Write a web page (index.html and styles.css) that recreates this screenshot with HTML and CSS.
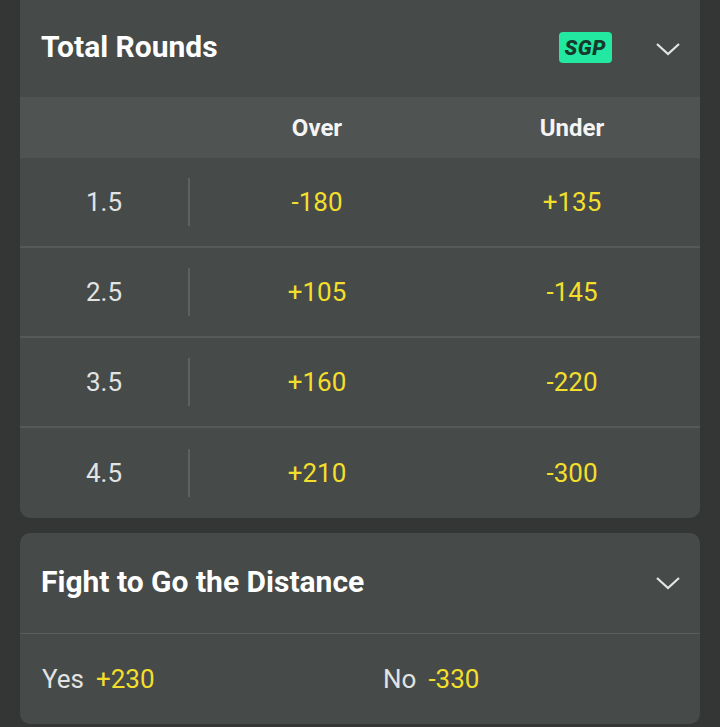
FILE: index.html
```html
<!DOCTYPE html>
<html lang="en">
<head>
    <meta charset="UTF-8">
    <meta name="viewport" content="width=device-width, initial-scale=1.0">
    <title>Markets</title>
    <link rel="stylesheet" href="styles.css">
</head>
<body>
    <div class="page">
        <section class="card card-top">
            <div class="card-header">
                <h2 class="card-title">Total Rounds</h2>
                <span class="sgp">SGP</span>
                <svg class="chevron" viewBox="0 0 26 16" width="26" height="16">
                    <path d="M2 3 L13 13 L24 3" fill="none" stroke="#e4e6e5" stroke-width="2.2"/>
                </svg>
            </div>
            <div class="col-head">
                <div></div>
                <div class="col-name">Over</div>
                <div class="col-name">Under</div>
            </div>
            <div class="odds-row">
                <div class="line">1.5</div>
                <div class="odd">-180</div>
                <div class="odd">+135</div>
            </div>
            <div class="odds-row">
                <div class="line">2.5</div>
                <div class="odd">+105</div>
                <div class="odd">-145</div>
            </div>
            <div class="odds-row">
                <div class="line">3.5</div>
                <div class="odd">+160</div>
                <div class="odd">-220</div>
            </div>
            <div class="odds-row last">
                <div class="line">4.5</div>
                <div class="odd">+210</div>
                <div class="odd">-300</div>
            </div>
        </section>

        <section class="card">
            <div class="card-header tall">
                <h2 class="card-title">Fight to Go the Distance</h2>
                <svg class="chevron" viewBox="0 0 26 16" width="26" height="16">
                    <path d="M2 3 L13 13 L24 3" fill="none" stroke="#e4e6e5" stroke-width="2.2"/>
                </svg>
            </div>
            <div class="yes-no">
                <div class="pick"><span class="pick-name">Yes</span><span class="odd-inline">+230</span></div>
                <div class="pick"><span class="pick-name">No</span><span class="odd-inline">-330</span></div>
            </div>
        </section>
    </div>
</body>
</html>
```

FILE: styles.css
```css
body {
    margin: 0;
    background-color: #343535;
    font-family: Roboto, "Noto Sans", sans-serif;
    color: #ffffff;
}
.page {
    padding: 0 20px;
}
.card {
    background-color: #464a49;
    border-radius: 10px;
    overflow: hidden;
    margin-top: 15px;
}
.card-top {
    margin-top: 0;
    border-radius: 0 0 10px 10px;
}
.card-header {
    height: 97px;
    display: flex;
    align-items: center;
    padding: 0 19px 0 21px;
}
.card-header.tall {
    height: 100px;
    border-bottom: 1px solid #5a5e5d;
}
.card-title {
    margin: 0 0 4px;
    font-size: 30px;
    font-weight: 700;
    flex: 1;
    color: #ffffff;
}
.sgp {
    background-color: #22e8a2;
    color: #16392b;
    font-weight: 900;
    font-style: italic;
    font-size: 21px;
    line-height: 26px;
    padding: 3px 6px 2px;
    margin-bottom: 2px;
    border-radius: 4px;
    margin-right: 43px;
    letter-spacing: 0.5px;
}
.chevron {
    display: block;
}
.col-head {
    height: 61px;
    background-color: #4f5351;
    display: grid;
    grid-template-columns: 170px 254px 1fr;
    align-items: center;
}
.col-name {
    text-align: center;
    font-weight: 700;
    font-size: 24px;
    color: #f4f4f4;
}
.odds-row {
    height: 88px;
    display: grid;
    grid-template-columns: 170px 254px 1fr;
    align-items: center;
    border-bottom: 2px solid #555958;
}
.odds-row.last {
    border-bottom: none;
    height: 90px;
}
.line {
    text-align: center;
    font-size: 26px;
    color: #e2e3e3;
    height: 48px;
    line-height: 48px;
    border-right: 2px solid #5d6160;
}
.odd {
    text-align: center;
    font-size: 26px;
    color: #f3df2b;
}
.yes-no {
    height: 90px;
    display: grid;
    grid-template-columns: 341px 1fr;
    align-items: center;
    padding-left: 22px;
}
.pick {
    font-size: 26px;
}
.pick-name {
    color: #e2e3e3;
    margin-right: 12px;
}
.odd-inline {
    color: #f3df2b;
}
```
